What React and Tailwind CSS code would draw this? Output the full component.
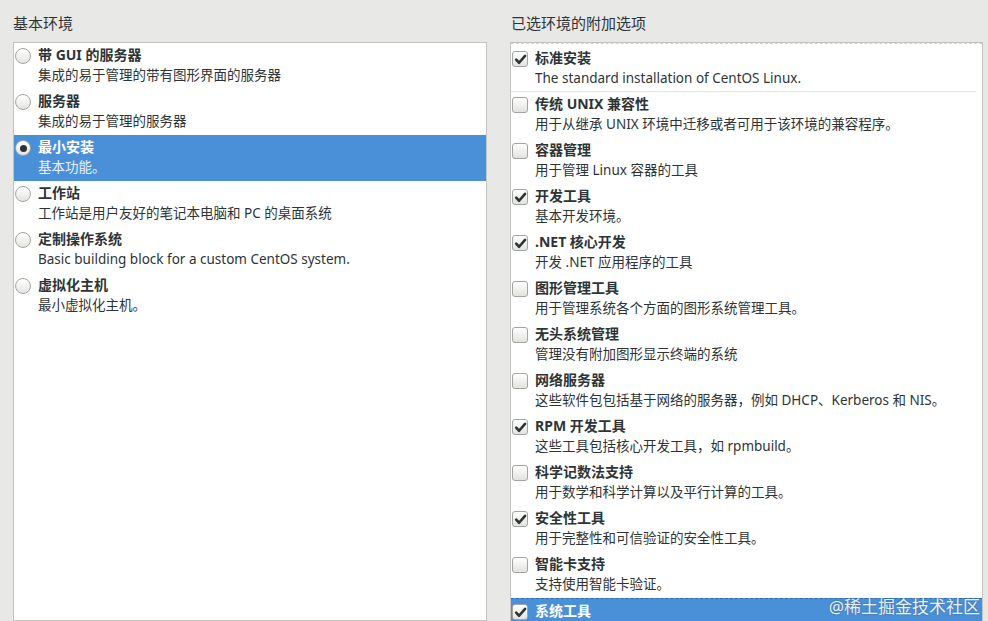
const envs = [
  { title: "带 GUI 的服务器", desc: "集成的易于管理的带有图形界面的服务器" },
  { title: "服务器", desc: "集成的易于管理的服务器" },
  { title: "最小安装", desc: "基本功能。", selected: true },
  { title: "工作站", desc: "工作站是用户友好的笔记本电脑和 PC 的桌面系统" },
  { title: "定制操作系统", desc: "Basic building block for a custom CentOS system." },
  { title: "虚拟化主机", desc: "最小虚拟化主机。" },
];

const addons = [
  { title: "传统 UNIX 兼容性", desc: "用于从继承 UNIX 环境中迁移或者可用于该环境的兼容程序。" },
  { title: "容器管理", desc: "用于管理 Linux 容器的工具" },
  { title: "开发工具", desc: "基本开发环境。", checked: true },
  { title: ".NET 核心开发", desc: "开发 .NET 应用程序的工具", checked: true },
  { title: "图形管理工具", desc: "用于管理系统各个方面的图形系统管理工具。" },
  { title: "无头系统管理", desc: "管理没有附加图形显示终端的系统" },
  { title: "网络服务器", desc: "这些软件包包括基于网络的服务器，例如 DHCP、Kerberos 和 NIS。" },
  { title: "RPM 开发工具", desc: "这些工具包括核心开发工具，如 rpmbuild。", checked: true },
  { title: "科学记数法支持", desc: "用于数学和科学计算以及平行计算的工具。" },
  { title: "安全性工具", desc: "用于完整性和可信验证的安全性工具。", checked: true },
  { title: "智能卡支持", desc: "支持使用智能卡验证。" },
  { title: "系统工具", desc: "", checked: true, selected: true, focus: true },
];

function Radio({ on }) {
  return (
    <div className="mt-[3px] w-[16px] h-[16px] shrink-0 rounded-full border border-[#a4a4a1] bg-gradient-to-b from-white to-[#e4e4e2] flex items-center justify-center">
      {on && <div className="w-[7px] h-[7px] rounded-full bg-[#2e3436]" />}
    </div>
  );
}

function Check({ on }) {
  return (
    <div className="mt-[3px] w-[16px] h-[16px] shrink-0 rounded-[3px] border border-[#a4a4a1] bg-gradient-to-b from-white to-[#e2e2e0] flex items-center justify-center">
      {on && (
        <svg width="13" height="13" viewBox="0 0 12 12">
          <path d="M2 6.2 L4.7 9 L10.2 2.6" fill="none" stroke="#2e3436" strokeWidth="2.4" strokeLinecap="round" strokeLinejoin="round" />
        </svg>
      )}
    </div>
  );
}

function Row({ item, mark, h = "h-[46px]" }) {
  const sel = item.selected;
  return (
    <div
      className={`${h} shrink-0 flex gap-[7px] pl-[1px] pt-[2px] ${sel ? "bg-[#4a90d9] text-white" : "text-[#2e3436]"} ${item.focus ? "border-t border-dashed border-[#2f6fb3]" : ""}`}
    >
      {mark}
      <div className="flex flex-col">
        <div className="text-[14px] leading-[20px] font-bold">{item.title}</div>
        {item.desc && (
          <div className={`text-[13.5px] leading-[21px] ${sel ? "text-[#eaf2fb]" : ""}`}>{item.desc}</div>
        )}
      </div>
    </div>
  );
}

export default function App() {
  return (
    <div
      className="relative w-[988px] h-[621px] overflow-hidden bg-[#e8e8e7] flex gap-[23px] pl-[13px] pt-[13px]"
      style={{ fontFamily: '"Noto Sans", "Noto Sans CJK SC", sans-serif' }}
    >
      <div className="w-[474px] flex flex-col">
        <div className="text-[15px] leading-[20px] text-[#2e3436] h-[29px]">基本环境</div>
        <div className="flex-1 bg-white border border-[#c2c2bf] flex flex-col">
          {envs.map((e) => (
            <Row key={e.title} item={e} mark={<Radio on={e.selected} />} />
          ))}
        </div>
      </div>

      <div className="w-[473px] flex flex-col">
        <div className="text-[15px] leading-[20px] text-[#2e3436] h-[29px] pl-[1px]">已选环境的附加选项</div>
        <div className="flex-1 bg-white border border-[#c2c2bf] border-b-0 flex flex-col overflow-hidden">
          <div className="h-[3px] shrink-0 border-t border-dashed border-[#d4d4d2]" />
          <Row item={{ title: "标准安装", desc: "The standard installation of CentOS Linux.", checked: true }} mark={<Check on />} h="h-[45px]" />
          <div className="h-px shrink-0 bg-[#e6e6e4] mr-[6px]" />
          {addons.map((a) => (
            <Row key={a.title} item={a} mark={<Check on={a.checked} />} />
          ))}
        </div>
      </div>

      <div className="absolute right-[8px] bottom-[3px] text-[17px] leading-[22px] text-white/90 [text-shadow:0_0_2px_rgba(0,0,0,0.35)]">
        @稀土掘金技术社区
      </div>
    </div>
  );
}
